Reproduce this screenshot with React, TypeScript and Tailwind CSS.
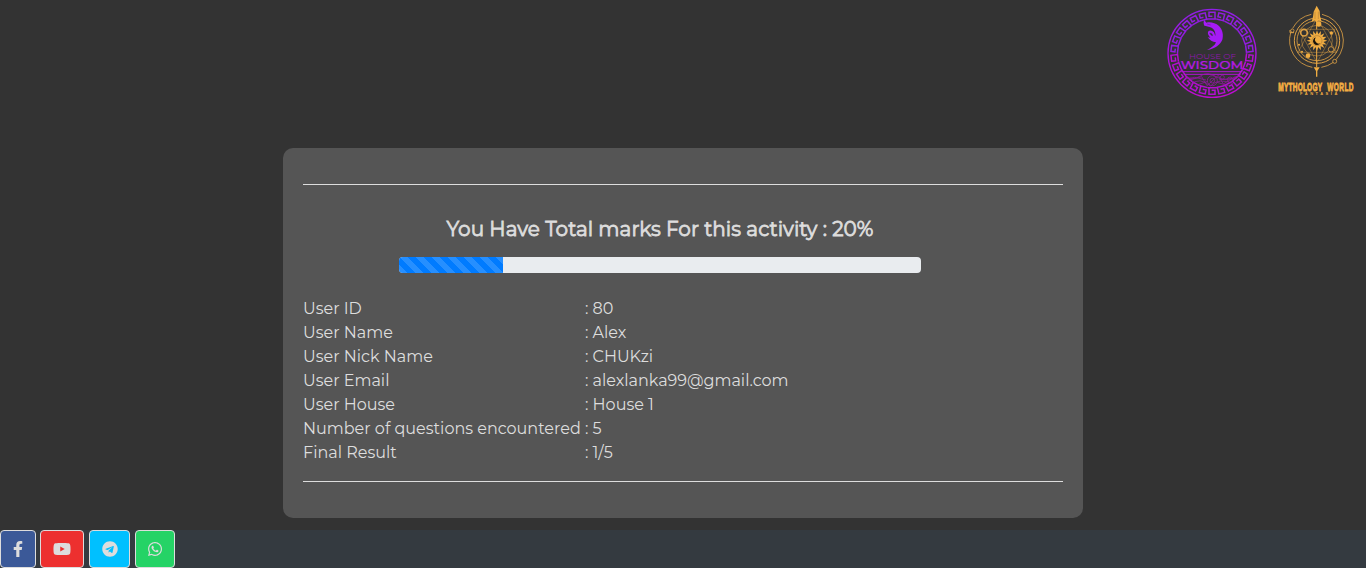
import { FaFacebookF, FaTelegram, FaWhatsapp, FaYoutube } from 'react-icons/fa';

const keys = Array.from({ length: 26 }, (_, i) => (i * 360) / 26);
const rays = Array.from({ length: 16 }, (_, i) => i * 22.5);

function WisdomLogo() {
  return (
    <svg className="h-[104px] w-[103px]" viewBox="0 0 309 312" fill="none">
      <defs>
        <linearGradient id="purple" x1="0" y1="25" x2="0" y2="295" gradientUnits="userSpaceOnUse">
          <stop offset="0" stopColor="#8f1fe6" />
          <stop offset="1" stopColor="#c00bd0" />
        </linearGradient>
      </defs>
      <circle cx="156" cy="160" r="132" strokeWidth="4" stroke="url(#purple)" />
      <g strokeWidth="4.5">
        {keys.map((a) => (
          <path
            key={a}
            transform={`rotate(${a} 156 160)`}
            d="M144 57H165V37H147V49H157M165 57H169"
            stroke={a > 95 && a < 265 ? '#b40fd2' : '#911edf'}
          />
        ))}
      </g>
      <path
        fill="#a51bf5"
        d="M133 60L139 68C150 65 166 68 177 78C188 89 191 105 187 119C181 134 166 146 141 150C155 143 165 136 168 127C158 126 148 120 143 112L151 113C145 106 141 98 146 93C150 89 158 92 162 97L166 108C168 98 163 88 155 83C147 79 138 78 133 77C130 71 130 65 133 60Z"
      />
      <path d="M149 99Q157 99 158 107Q153 108 149 99ZM141 72L152 75" fill="#333" stroke="#4c2870" strokeWidth="1.5" />
      <text x="87" y="178" textLength="141" lengthAdjust="spacingAndGlyphs" fill="#8c18aa" fontFamily="Montserrat, sans-serif" fontSize="20">HOUSE OF</text>
      <text x="62" y="206" textLength="188" lengthAdjust="spacingAndGlyphs" fill="#b41ae2" stroke="#b41ae2" strokeWidth=".7" fontFamily="Montserrat, sans-serif" fontSize="31" fontWeight="500">WISDOM</text>
      <path d="M65 215H247M71 223H242" stroke="#b113d5" strokeWidth="3" />
      <g stroke="#9c15ad" strokeWidth="2.5" opacity=".85">
        <circle cx="157" cy="242" r="15" />
        <circle cx="157" cy="242" r="7" />
        <circle cx="210" cy="239" r="8" />
        <circle cx="187" cy="232" r="6" />
        <path d="M75 229Q99 243 121 228T168 230T235 229M83 242L125 230L141 257L175 226L190 252L227 229M91 254Q119 229 151 258Q178 232 219 251M77 237L104 232L138 240M178 239L230 235M105 257L143 244M171 247L205 257" />
      </g>
    </svg>
  );
}

function MythologyLogo() {
  return (
    <svg className="h-[104px] w-[100px]" viewBox="0 0 300 312" fill="none">
      <g stroke="#dca045" strokeWidth="2.5">
        <path d="M136 43A82 82 0 0 0 80 85M74 98A82 82 0 0 0 139 202M166 202A82 82 0 0 0 202 187M210 179A82 82 0 0 0 168 43" />
        <circle cx="153" cy="122" r="68" strokeWidth="3" />
        <circle cx="153" cy="122" r="60" strokeWidth="2.5" />
        <circle cx="153" cy="122" r="46" strokeWidth="1.6" />
        <path d="M153 53L96 157H211ZM153 188L99 88H207Z" strokeWidth="1.7" opacity=".75" />
        <circle cx="114" cy="98" r="10" fill="#333" strokeWidth="5" />
        <circle cx="195" cy="148" r="8" fill="#333" />
        <circle cx="206" cy="184" r="6" />
        <path d="M72 90V98H84" strokeWidth="3" />
        <circle cx="79" cy="92" r="5" />
      </g>
      <g fill="#f0ad42">
        <path d="M152 17L143 35L141 50L137 65L147 61L152 70L157 61L167 65L162 48L161 33Z" />
        <circle cx="126" cy="167" r="7" />
        <circle cx="196" cy="99" r="5" />
        <circle cx="158" cy="72" r="8" />
        <circle cx="99" cy="134" r="3" />
        <circle cx="108" cy="155" r="3" />
        <path d="M143 202H161L154 213V230H150V213Z" />
        {rays.map((a) => (
          <path key={a} transform={`rotate(${a} 153 122)`} d="M148 106L153 91L158 106Z" />
        ))}
        <circle cx="153" cy="122" r="18" />
      </g>
      <circle cx="153" cy="122" r="15" stroke="#9d7134" strokeWidth="1.5" />
      <path d="M149 112A12 12 0 1 0 163 130A12 12 0 0 1 149 112Z" fill="#18130b" />
      <path d="M147 35V57M157 35V57" stroke="#a77836" strokeWidth="1.5" />
      <path d="M152 144V201M152 68V88" stroke="#efab43" strokeWidth="3" />
      <g fill="#f3ae43" fontFamily="'Liberation Sans', sans-serif" fontWeight="700">
        <text transform="translate(37 272) scale(.56 1)" textLength="234" lengthAdjust="spacing" fontSize="35" stroke="#f3ae43" strokeWidth="2.5">MYTHOLOGY</text>
        <text transform="translate(184 272) scale(.56 1)" textLength="140" lengthAdjust="spacing" fontSize="35" stroke="#f3ae43" strokeWidth="2.5">WORLD</text>
        <text x="102" y="284" textLength="112" fontSize="12">FANTASIA</text>
      </g>
    </svg>
  );
}

const rows = [
  { label: 'User ID', value: '80' },
  { label: 'User Name', value: 'Alex' },
  { label: 'User Nick Name', value: 'CHUKzi' },
  { label: 'User Email', value: 'alexlanka99@gmail.com' },
  { label: 'User House', value: 'House 1' },
  { label: 'Number of questions encountered', value: '5' },
  { label: 'Final Result', value: '1/5' },
];

export default function App() {
  return (
    <div className="flex h-[568px] w-full flex-col overflow-hidden bg-[#333] font-['Montserrat',sans-serif] text-base leading-6 text-[#ddd]">
      <header className="flex h-[148px] justify-end gap-[3px]">
        <WisdomLogo />
        <MythologyLogo />
      </header>
      <main className="mx-auto h-[370px] w-[800px] rounded-[10px] bg-[#555] px-5 pt-9">
        <hr className="border-[#ddd]" />
        <section className="ml-24 w-[522px] pt-8">
          <h1 className="h-6 text-center text-xl leading-6 font-normal tracking-[0.02px] whitespace-nowrap text-[#ddd] [-webkit-text-stroke:0.8px_#ddd]">
            You Have Total marks For this activity : 20%
          </h1>
          <div className="mt-4 h-4 overflow-hidden rounded bg-[#e9ecef]">
            <div className="h-full w-1/5 bg-[#007bff] bg-[linear-gradient(45deg,rgba(255,255,255,.15)_25%,transparent_25%,transparent_50%,rgba(255,255,255,.15)_50%,rgba(255,255,255,.15)_75%,transparent_75%,transparent)] bg-[length:16px_16px]" />
          </div>
        </section>
        <dl className="mt-6 mb-4">
          {rows.map((row) => (
            <div key={row.label} className="flex h-6 whitespace-nowrap">
              <dt className="w-[282px]">{row.label}</dt>
              <dd>: {row.value}</dd>
            </div>
          ))}
        </dl>
        <hr className="border-[#ddd]" />
      </main>
      <footer className="mt-3 flex h-[38px] bg-[#343a40]">
        <a aria-label="Facebook" className="mr-1 flex h-[38px] w-9 items-center justify-center rounded border border-[#ddd] bg-[#3b5998]"><FaFacebookF /></a>
        <a aria-label="YouTube" className="mr-[5px] flex h-[38px] w-11 items-center justify-center rounded border border-[#ddd] bg-[#ed302f]"><FaYoutube className="h-4 w-[18px]" /></a>
        <a aria-label="Telegram" className="mr-[5px] flex h-[38px] w-[41px] items-center justify-center rounded border border-[#ddd] bg-[#00c0ff]"><FaTelegram /></a>
        <a aria-label="WhatsApp" className="flex h-[38px] w-10 items-center justify-center rounded border border-[#ddd] bg-[#25d366]"><FaWhatsapp /></a>
      </footer>
    </div>
  );
}
